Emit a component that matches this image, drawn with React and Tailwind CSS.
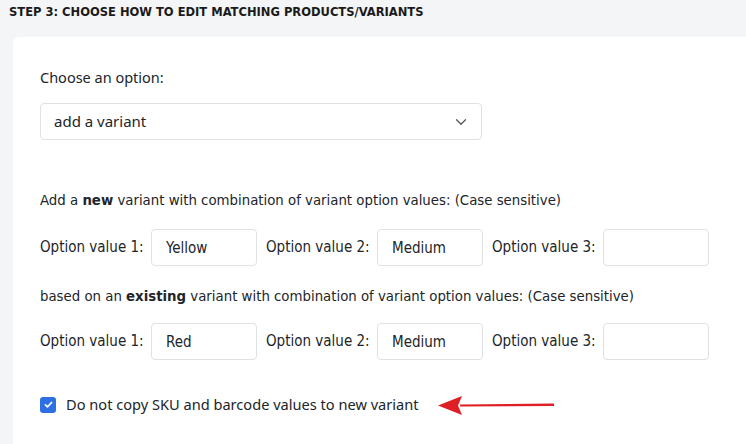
import { useState } from 'react'

const OptionRow = ({ values }) => {
    return (
        <div className="flex items-center">
            {values.map((v, i) => (
                <div key={i} className="flex items-center">
                    <span className={`${i === 0 ? '' : 'ml-[9px]'} w-[111px] text-[15px] text-[#212529]`}>
                        Option value {i + 1}:
                    </span>
                    <input
                        type="text"
                        defaultValue={v}
                        className="w-[106px] h-[37px] px-[14px] border border-[#dee2e6] rounded-[4px] text-[15px] text-[#212529] outline-none"
                    />
                </div>
            ))}
        </div>
    )
}

export default function App() {
    const [skipSku, setSkipSku] = useState(true)

    return (
        <div className="w-[746px] h-[444px] overflow-hidden bg-[#f4f5f7]" style={{ fontFamily: '"Noto Sans", "Open Sans", sans-serif' }}>
            <h2 className="pl-[9px] pt-[2px] h-[37px] text-[12.8px] font-bold uppercase text-[#1a1a1a]" style={{ fontFamily: '"DejaVu Sans Condensed", "DejaVu Sans", sans-serif' }}>
                Step 3: Choose how to edit matching products/variants
            </h2>

            <div className="ml-[13px] h-[420px] bg-white rounded-tl-[6px] pl-[27px] pt-[29px]">
                <p className="text-[14.5px] text-[#212529] leading-[22px]">Choose an option:</p>

                {/* Action select */}
                <div className="relative mt-[15px] w-[442px]">
                    <select
                        defaultValue="add"
                        className="appearance-none w-full h-[37px] pl-[13px] border border-[#dee2e6] rounded-[4px] bg-white text-[15px] text-[#212529] outline-none"
                    >
                        <option value="add">add a variant</option>
                    </select>
                    <svg className="absolute right-[15px] top-[13px] w-[12px] h-[12px] pointer-events-none" viewBox="0 0 16 16" fill="none" stroke="#555" strokeWidth="1.6" strokeLinecap="round" strokeLinejoin="round">
                        <path d="M2 5l6 6 6-6" />
                    </svg>
                </div>

                <div style={{ fontFamily: '"DejaVu Sans Condensed", "DejaVu Sans", sans-serif' }}>
                    <p className="mt-[49px] text-[14.8px] text-[#212529] leading-[22px]">
                        Add a <b>new</b> variant with combination of variant option values: (Case sensitive)
                    </p>
                    <div className="mt-[18px]">
                        <OptionRow values={['Yellow', 'Medium', '']} />
                    </div>

                    <p className="mt-[19px] text-[14.8px] text-[#212529] leading-[22px]">
                        based on an <b>existing</b> variant with combination of variant option values: (Case sensitive)
                    </p>
                    <div className="mt-[16px]">
                        <OptionRow values={['Red', 'Medium', '']} />
                    </div>
                </div>

                {/* Copy option */}
                <div className="mt-[34px] flex items-center">
                    <label className="flex items-center gap-[10px] cursor-pointer">
                        <button
                            type="button"
                            onClick={() => setSkipSku(!skipSku)}
                            className={`w-[16px] h-[16px] rounded-[3px] flex items-center justify-center ${skipSku ? 'bg-[#2f6fe4]' : 'border border-gray-400 bg-white'}`}
                        >
                            {skipSku && (
                                <svg viewBox="0 0 16 16" className="w-[11px] h-[11px]" fill="none" stroke="white" strokeWidth="2.4" strokeLinecap="round" strokeLinejoin="round">
                                    <path d="M3.5 8.5l3 3 6-6.5" />
                                </svg>
                            )}
                        </button>
                        <span className="text-[14.6px] text-[#212529]">Do not copy SKU and barcode values to new variant</span>
                    </label>
                    <svg className="ml-[19px]" width="118" height="20" viewBox="0 0 118 20">
                        <path d="M22 9.5 L116 8.5 L116 11 L22 11.5 Z" fill="#de1f26" />
                        <path d="M0 10.5 L24 1 L20 10.5 L24 20 Z" fill="#de1f26" />
                    </svg>
                </div>
            </div>
        </div>
    )
}
